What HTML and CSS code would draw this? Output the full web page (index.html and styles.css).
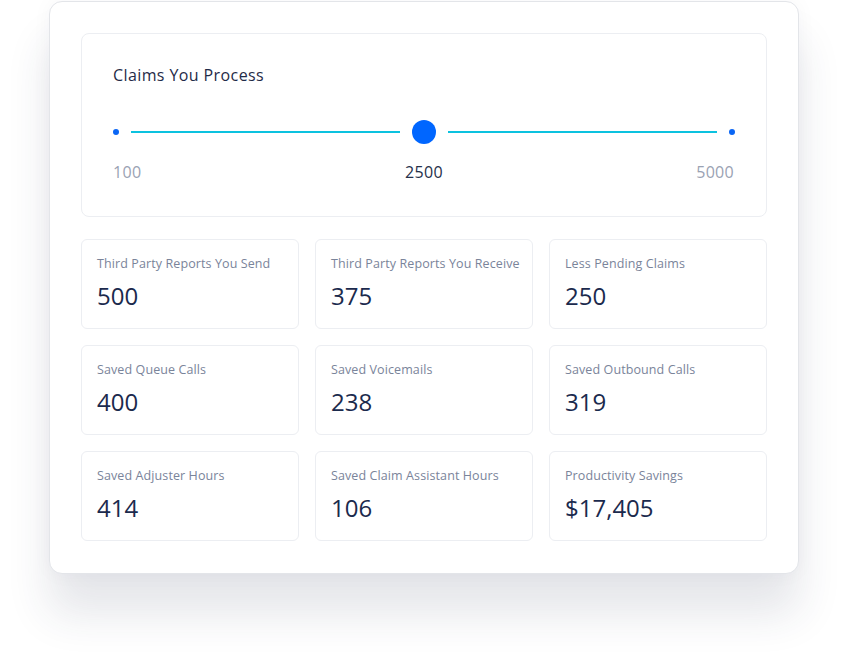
FILE: index.html
```html
<!DOCTYPE html>
<html lang="en">
<head>
<meta charset="utf-8">
<title>Claims Calculator</title>
<link rel="stylesheet" href="styles.css">
</head>
<body>
<div class="card">
  <section class="panel">
    <h2 class="panel-title">Claims You Process</h2>
    <div class="slider">
      <span class="dot"></span>
      <span class="track"></span>
      <span class="thumb"></span>
      <span class="track"></span>
      <span class="dot"></span>
    </div>
    <div class="scale">
      <span class="scale-min">100</span>
      <span class="scale-cur">2500</span>
      <span class="scale-max">5000</span>
    </div>
  </section>
  <div class="stats">
    <div class="stat"><div class="stat-label">Third Party Reports You Send</div><div class="stat-value">500</div></div>
    <div class="stat"><div class="stat-label">Third Party Reports You Receive</div><div class="stat-value">375</div></div>
    <div class="stat"><div class="stat-label">Less Pending Claims</div><div class="stat-value">250</div></div>
    <div class="stat"><div class="stat-label">Saved Queue Calls</div><div class="stat-value">400</div></div>
    <div class="stat"><div class="stat-label">Saved Voicemails</div><div class="stat-value">238</div></div>
    <div class="stat"><div class="stat-label">Saved Outbound Calls</div><div class="stat-value">319</div></div>
    <div class="stat"><div class="stat-label">Saved Adjuster Hours</div><div class="stat-value">414</div></div>
    <div class="stat"><div class="stat-label">Saved Claim Assistant Hours</div><div class="stat-value">106</div></div>
    <div class="stat"><div class="stat-label">Productivity Savings</div><div class="stat-value">$17,405</div></div>
  </div>
</div>
</body>
</html>
```
FILE: styles.css
```css
* { box-sizing: border-box; }
html, body { margin: 0; padding: 0; background: #ffffff; }
body {
  font-family: "Open Sans", "Liberation Sans", sans-serif;
  color: #1c2a4a;
  padding: 1px 0 0 49px;
  min-height: 670px;
}
.card {
  width: 750px;
  height: 573px;
  background: #ffffff;
  border: 1px solid #e3e5e9;
  border-radius: 13px;
  padding: 31px;
  box-shadow: 0 40px 44px rgba(40, 52, 80, 0.12), 0 0 20px rgba(40, 52, 80, 0.04);
}
.panel {
  border: 1px solid #eceef2;
  border-radius: 8px;
  height: 184px;
  padding: 30px 31px 0 31px;
}
.panel-title {
  margin: 0;
  font-size: 16px;
  font-weight: 400;
  line-height: 22px;
  color: #1f2b48;
  letter-spacing: 0.4px;
}
.slider {
  margin-top: 34px;
  height: 24px;
  display: flex;
  align-items: center;
  gap: 12px;
}
.dot {
  width: 6px;
  height: 6px;
  border-radius: 50%;
  background: #0a66f5;
  flex: none;
}
.track {
  flex: 1;
  height: 2px;
  background: #0cc2df;
}
.thumb {
  width: 24px;
  height: 24px;
  border-radius: 50%;
  background: #0066ff;
  flex: none;
}
.scale {
  margin-top: 18px;
  display: grid;
  grid-template-columns: 1fr auto 1fr;
  font-size: 16px;
  line-height: 20px;
  letter-spacing: 0.3px;
}
.scale-min { color: #9aa2b3; text-align: left; }
.scale-cur { color: #25304a; text-align: center; }
.scale-max { color: #9aa2b3; text-align: right; margin-right: 1px; }
.stats {
  margin-top: 22px;
  display: grid;
  grid-template-columns: repeat(3, minmax(0, 1fr));
  gap: 16px;
}
.stat {
  height: 90px;
  border: 1px solid #eceef2;
  border-radius: 6px;
  padding: 15px 15px 0 15px;
}
.stat-label {
  font-size: 12.5px;
  line-height: 18px;
  color: #7a849a;
  letter-spacing: 0.1px;
  white-space: nowrap;
}
.stat-value {
  margin-top: 8px;
  font-size: 24px;
  line-height: 30px;
  color: #1b2a4d;
}
```
